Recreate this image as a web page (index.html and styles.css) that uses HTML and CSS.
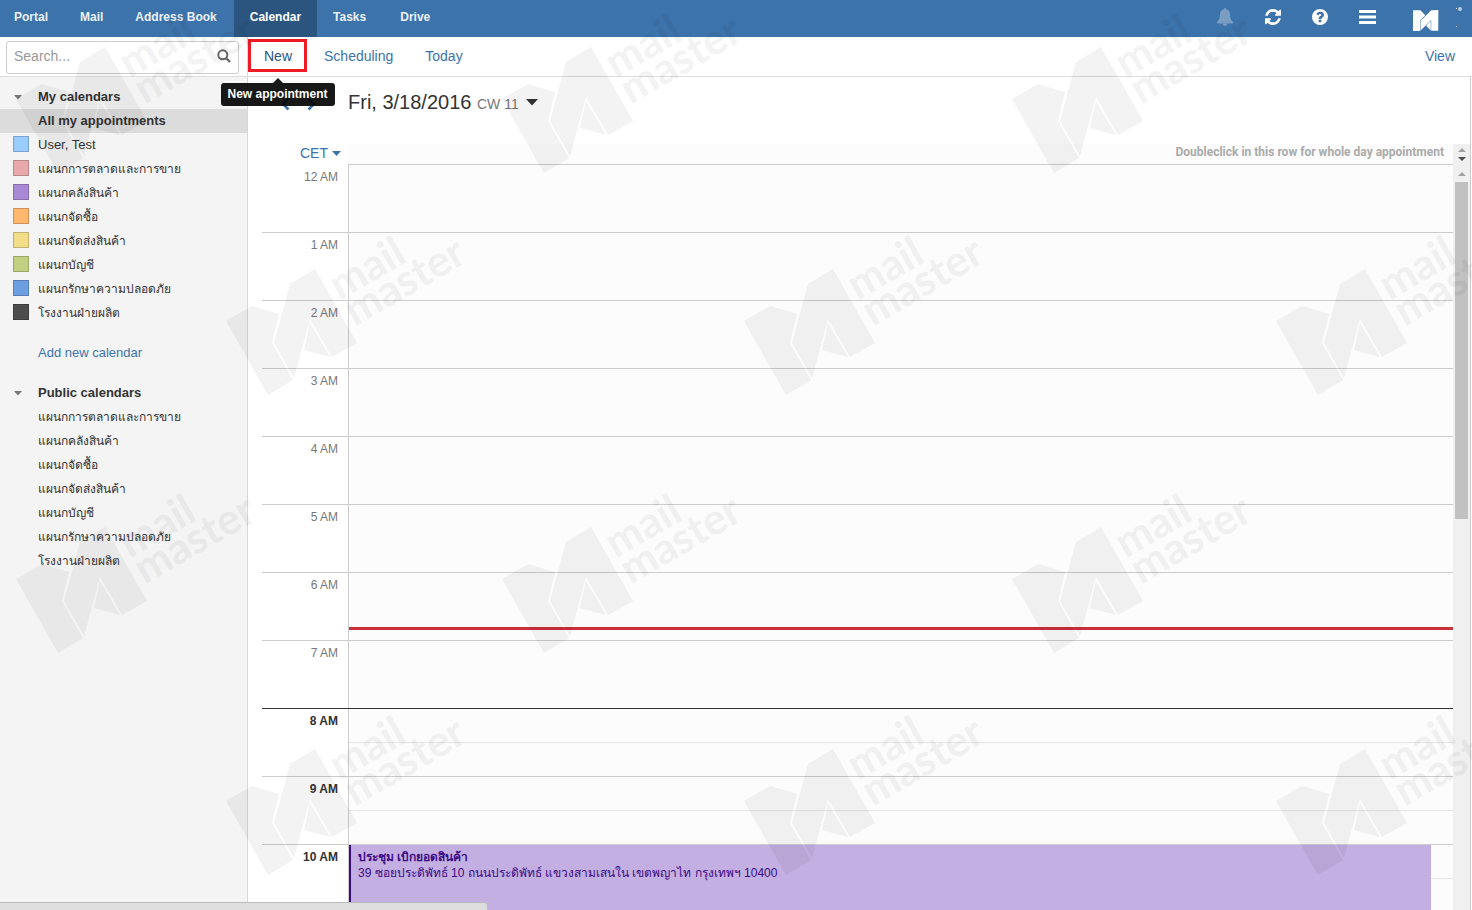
FILE: index.html
```html
<!DOCTYPE html>
<html lang="en">
<head>
<meta charset="utf-8">
<title>Calendar</title>
<link rel="stylesheet" href="styles.css">
</head>
<body>
<div class="app">
  <header class="topbar">
    <nav class="apps">
      <a href="#">Portal</a><a href="#">Mail</a><a href="#">Address Book</a><a href="#" class="active" aria-current="page">Calendar</a><a href="#">Tasks</a><a href="#">Drive</a>
    </nav>
    <div class="tools">
      <button type="button" class="tool dim" aria-label="Notifications"><svg width="18" height="18" viewBox="0 0 18 18"><path fill="currentColor" d="M9 0c.7 0 1.100.4 1.100 1.200C12.700 1.700 14 3.800 14 6.300c0 4 1.100 6.200 3.200 7.900 0 .7-.5 1.200-1.200 1.200H2c-.7 0-1.200-.5-1.200-1.200C2.900 12.500 4 10.300 4 6.300c0-2.500 1.300-4.600 3.900-5.100C7.900.4 8.300 0 9 0zM6.800 15.800h4.400A2.200 2.200 0 0 1 9 18a2.200 2.200 0 0 1-2.200-2.200z"/></svg></button>
      <button type="button" class="tool" aria-label="Refresh"><svg width="16" height="16" viewBox="0 0 1536 1536"><path fill="currentColor" d="M1511 928q0 5-1 7-64 268-268 434.500T764 1536q-146 0-282.500-55T238 1324l-129 129q-19 19-45 19t-45-19-19-45V960q0-26 19-45t45-19h448q26 0 45 19t19 45-19 45l-137 137q71 66 161 102t187 36q134 0 250-65t186-179q11-17 53-117 8-23 30-23h192q13 0 22.500 9.500t9.500 22.500zm25-800v448q0 26-19 45t-45 19h-448q-26 0-45-19t-19-45 19-45l138-138Q969 256 768 256q-134 0-250 65T332 500q-11 17-53 117-8 23-30 23H50q-13 0-22.500-9.500T18 608v-7q65-268 270-434.500T768 0q146 0 284 55.500T1297 212l130-129q19-19 45-19t45 19 19 45z"/></svg></button>
      <button type="button" class="tool" aria-label="Help"><svg width="16" height="16" viewBox="0 0 1536 1536"><path fill="currentColor" fill-rule="evenodd" d="M768 0a768 768 0 1 1 0 1536A768 768 0 0 1 768 0zm128 1248v-192q0-14-9-23t-23-9H672q-14 0-23 9t-9 23v192q0 14 9 23t23 9h192q14 0 23-9t9-23zm256-672q0-88-55.500-163T958 297t-170-41q-243 0-371 213-15 24 8 42l132 100q7 6 19 6 16 0 25-12 53-68 86-92 34-24 86-24 48 0 85.500 26t37.500 59q0 38-20 61t-68 45q-63 28-115.500 86.500T640 892v36q0 14 9 23t23 9h192q14 0 23-9t9-23q0-19 21.500-49.500T972 829q32-18 49-28.500t46-35 44.500-48 28-60.500 12.500-81z"/></svg></button>
      <button type="button" class="tool" aria-label="Menu"><svg width="17" height="14" viewBox="0 0 17 14"><path fill="currentColor" d="M0 0h17v3H0zM0 5.500h17v3H0zM0 11h17v3H0z"/></svg></button>
      <svg class="brand" width="49" height="28" viewBox="0 0 49 28"><g fill="#fff" transform="translate(0 5) scale(.245) translate(43 -73) rotate(30)"><path d="M0 85l26-15 27 8-7 29 21 37-25 15z"/><path d="M48 107L64 48l25-15 42 74-25 14-22-38-16 59z"/><path d="M84 87l20 34-26-7z"/></g><circle cx="47" cy="4" r="2" fill="#b9cce0"/><path fill="#fff" d="M43 3h1v1h-1zM43 21h1v1h-1z"/></svg>
    </div>
  </header>

  <div class="body">
    <aside class="sidebar">
      <form class="search">
        <input type="text" placeholder="Search..." aria-label="Search">
        <button type="button" aria-label="Start search"><svg width="14" height="14" viewBox="0 0 14 14" fill="none" stroke="currentColor" stroke-width="2"><circle cx="5.800" cy="5.800" r="4.500"/><path d="M9 9l4 4" stroke-width="2.400"/></svg></button>
      </form>
      <div class="folders">
        <h2><svg width="8" height="5" viewBox="0 0 8 5"><path d="M0 0h8L4 4.500z"/></svg>My calendars</h2>
        <ul>
          <li class="selected"><a href="#">All my appointments</a></li>
          <li><i class="c1"></i><a href="#">User, Test</a></li>
          <li lang="th"><i class="c2"></i><a href="#">แผนกการตลาดและการขาย</a></li>
          <li lang="th"><i class="c3"></i><a href="#">แผนกคลังสินค้า</a></li>
          <li lang="th"><i class="c4"></i><a href="#">แผนกจัดซื้อ</a></li>
          <li lang="th"><i class="c5"></i><a href="#">แผนกจัดส่งสินค้า</a></li>
          <li lang="th"><i class="c6"></i><a href="#">แผนกบัญชี</a></li>
          <li lang="th"><i class="c7"></i><a href="#">แผนกรักษาความปลอดภัย</a></li>
          <li lang="th"><i class="c8"></i><a href="#">โรงงานฝ่ายผลิต</a></li>
        </ul>
        <a href="#" class="add">Add new calendar</a>
        <h2><svg width="8" height="5" viewBox="0 0 8 5"><path d="M0 0h8L4 4.500z"/></svg>Public calendars</h2>
        <ul lang="th">
          <li><a href="#">แผนกการตลาดและการขาย</a></li>
          <li><a href="#">แผนกคลังสินค้า</a></li>
          <li><a href="#">แผนกจัดซื้อ</a></li>
          <li><a href="#">แผนกจัดส่งสินค้า</a></li>
          <li><a href="#">แผนกบัญชี</a></li>
          <li><a href="#">แผนกรักษาความปลอดภัย</a></li>
          <li><a href="#">โรงงานฝ่ายผลิต</a></li>
        </ul>
      </div>
    </aside>

    <main class="main">
      <div class="toolbar">
        <div class="new-wrap">
          <a href="#" class="new">New</a>
          <div class="tooltip" role="tooltip">New appointment</div>
        </div>
        <a href="#">Scheduling</a>
        <a href="#">Today</a>
        <a href="#" class="view">View</a>
      </div>
      <div class="calendar">
        <div class="heading">
          <div class="arrows">
            <button type="button" aria-label="Previous day"><svg width="9" height="14" viewBox="0 0 9 14"><path d="M7.500 1.500L2 7l5.500 5.500" fill="none" stroke="currentColor" stroke-width="2.600"/></svg></button>
            <button type="button" aria-label="Next day"><svg width="9" height="14" viewBox="0 0 9 14"><path d="M1.500 1.500L7 7l-5.500 5.500" fill="none" stroke="currentColor" stroke-width="2.600"/></svg></button>
          </div>
          <button type="button" class="date">Fri, 3/18/2016 <span>CW 11</span><svg width="12" height="7" viewBox="0 0 12 7"><path fill="currentColor" d="M0 0h12L6 6.500z"/></svg></button>
        </div>
        <div class="allday">
          <button type="button" class="zone">CET<svg width="9" height="5" viewBox="0 0 9 5"><path fill="currentColor" d="M0 0h9L4.500 5z"/></svg></button>
          <div class="allday-row">Doubleclick in this row for whole day appointment</div>
          <div class="track"><svg width="17" height="20" viewBox="0 0 17 20"><path fill="#a3a3a3" d="M5 8h8L9 4z"/><path fill="#505050" d="M5 13h8l-4 4z"/></svg></div>
        </div>
        <div class="day">
          <div class="hours">
            <div class="hour first"><span>12 AM</span><div></div></div>
            <div class="hour"><span>1 AM</span><div></div></div>
            <div class="hour"><span>2 AM</span><div></div></div>
            <div class="hour"><span>3 AM</span><div></div></div>
            <div class="hour"><span>4 AM</span><div></div></div>
            <div class="hour"><span>5 AM</span><div></div></div>
            <div class="hour"><span>6 AM</span><div></div></div>
            <div class="hour"><span>7 AM</span><div></div></div>
            <div class="hour work start"><span>8 AM</span><div></div></div>
            <div class="hour work"><span>9 AM</span><div></div></div>
            <div class="hour work"><span>10 AM</span><div></div></div>
            <div class="now"></div>
            <article class="event" lang="th"><strong>ประชุม เบิกยอดสินค้า</strong><p>39 ซอยประดิพัทธ์ 10 ถนนประดิพัทธ์ แขวงสามเสนใน เขตพญาไท กรุงเทพฯ 10400</p></article>
          </div>
          <div class="track"><svg width="17" height="17" viewBox="0 0 17 17"><path fill="#a3a3a3" d="M5 12h8L9 8z"/></svg><div class="thumb"></div></div>
        </div>
      </div>
    </main>
  </div>

  <div class="status"></div>

  <svg class="watermark" aria-hidden="true">
    <defs>
      <g id="mark">
        <path d="M0 85l26-15 27 8-7 29 21 37-25 15z"/>
        <path d="M48 107L64 48l25-15 42 74-25 14-22-38-16 59z"/>
        <path d="M84 87l20 34-26-7z"/>
        <g transform="translate(115 63) rotate(-30)"><text x="-2" y="1">mail</text><text x="-2" y="31">master</text></g>
      </g>
    </defs>
    <use href="#mark" x="16" y="14"/><use href="#mark" x="502" y="14"/><use href="#mark" x="1012" y="14"/>
    <use href="#mark" x="226" y="236"/><use href="#mark" x="744" y="236"/><use href="#mark" x="1276" y="236"/>
    <use href="#mark" x="16" y="494"/><use href="#mark" x="502" y="494"/><use href="#mark" x="1012" y="494"/>
    <use href="#mark" x="226" y="716"/><use href="#mark" x="744" y="716"/><use href="#mark" x="1276" y="716"/>
  </svg>
</div>
</body>
</html>
```
FILE: styles.css
```css
* { box-sizing: border-box; }
body { margin: 0; font-family: "Liberation Sans", Arial, sans-serif; font-size: 13px; color: #333; background: #fff; }
a { color: inherit; text-decoration: none; }
button { font: inherit; color: inherit; background: none; border: 0; padding: 0; margin: 0; display: flex; align-items: center; cursor: pointer; }
ul { list-style: none; margin: 0; padding: 0; }
svg { display: block; flex: none; }

.app { position: relative; height: 100vh; display: flex; flex-direction: column; overflow: hidden; }

.topbar { flex: none; height: 37px; display: flex; justify-content: space-between; background: #3d73ab; color: #fff; }
.apps { display: flex; font-size: 12px; font-weight: bold; line-height: 34px; color: #ebf1f7; }
.apps a { padding: 0 16px; }
.apps a:first-child { padding-left: 14px; }
.apps .active { margin-left: 1px; background: #2b557f; color: #fff; }
.apps a:last-child { padding-left: 18px; }
.tools { display: flex; align-items: center; gap: 31px; padding: 0 10px 4px 0; }
.tool.dim { color: #7a9dc4; }
.brand { margin: 4px 0 0 6px; }

.body { flex: 1; min-height: 0; display: flex; }
.sidebar { flex: none; width: 248px; border-right: 1px solid #d8d8d8; background: #f4f4f4; }
.search { display: flex; align-items: center; height: 40px; padding: 4px 8px 2px 6px; background: #fff; border-bottom: 1px solid #ddd; }
.search input { flex: 1; min-width: 0; height: 33px; padding: 0 32px 4px 7px; border: 1px solid #ccc; border-radius: 3px; font: 14px "Liberation Sans", Arial, sans-serif; background: #fff; }
.search input::placeholder { color: #999; }
.search button { margin-left: -22px; margin-right: 8px; padding-bottom: 3px; color: #666; }
.folders { padding-top: 8px; line-height: 24px; }
.folders h2 { display: flex; align-items: center; gap: 16px; margin: 0; padding-left: 14px; font-size: 13px; line-height: 24px; }
.folders h2 svg { fill: #777; }
.folders li { display: flex; align-items: center; height: 24px; padding-left: 13px; }
.folders li:lang(th) { font-size: 12px; }
.folders li a { margin-left: 9px; }
.folders li a:first-child { margin-left: 25px; }
.folders .selected { background: #dcdcdc; font-weight: bold; }
.folders i { width: 16px; height: 16px; margin-bottom: 2px; border: 1px solid rgba(0, 0, 0, .2); }
.c1 { background: #9cf; }
.c2 { background: #e8a9ab; }
.c3 { background: #a889d6; }
.c4 { background: #ffb66e; }
.c5 { background: #f2de88; }
.c6 { background: #c2d082; }
.c7 { background: #6c9fe0; }
.c8 { background: #4d4d4d; }
.folders .add { display: block; margin: 16px 0; padding-left: 38px; color: #3c73aa; }

.main { flex: 1; min-width: 0; display: flex; flex-direction: column; }
.toolbar { flex: none; display: flex; align-items: flex-start; height: 40px; padding-top: 2px; border-bottom: 1px solid #ddd; font-size: 14px; line-height: 35px; color: #3c73aa; }
.toolbar > a { margin-left: 17px; margin-right: 15px; }
.toolbar .view { margin-left: auto; margin-right: 17px; }
.new-wrap { position: relative; }
.new { display: block; height: 33px; padding: 0 12px 0 13px; border: 3px solid #ed1c24; line-height: 29px; color: #2b557f; }
.tooltip { position: absolute; z-index: 2; top: 44px; left: 50%; transform: translateX(-50%); padding: 0 7px; border-radius: 3px; background: #000; opacity: .9; color: #fff; font-size: 12px; font-weight: bold; line-height: 23px; white-space: nowrap; }
.tooltip::before { content: ""; position: absolute; top: -5px; left: 50%; margin-left: -5px; border: 5px solid transparent; border-top: 0; border-bottom-color: #000; }

.calendar { flex: 1; min-height: 0; display: flex; flex-direction: column; margin-right: 1px; border-right: 1px solid #ccc; }
.heading { flex: none; display: flex; height: 67px; padding: 13px 0 0 33px; }
.arrows { display: flex; gap: 17px; width: 67px; height: 24px; color: #3c73aa; }
.date { height: 24px; font-size: 20px; white-space: pre; }
.date span { font-size: 14px; color: #777; padding-top: 4px; }
.date svg { margin-left: 7px; }
.allday { flex: none; display: flex; height: 20px; }
.zone { width: 100px; height: 18px; padding-left: 52px; gap: 4px; font-size: 14px; color: #3c73aa; }
.allday-row { flex: 1; padding-right: 9px; background: #fcfcfc; color: #aaa; font: bold 12px/16px Roboto, sans-serif; text-align: right; }
.arrows button { height: 28px; }
.track { flex: none; width: 17px; background: #f0f0f0; }
.thumb { height: 337px; margin: 1px 2px 0; background: #c1c1c1; }
.day { flex: 1; min-height: 0; display: flex; overflow: hidden; }
.hours { position: relative; flex: 1; min-width: 0; }
.hour { display: flex; height: 68px; margin-left: 14px; border-top: 1px solid #ccc; font-size: 12px; color: #777; }
.hour span { width: 86px; padding: 5px 10px 0 0; text-align: right; }
.hour > div { flex: 1; border-left: 1px solid #ccc; background: #fcfcfc; }
.hour.first { border-top: 0; }
.hour.first span { padding-top: 6px; }
.hour.first > div { border-top: 1px solid #ccc; }
.hour.start { border-top-color: #333; }
.work span { font-weight: bold; color: #333; }
.work > div::before { content: ""; display: block; height: 33px; border-bottom: 1px solid #e5e5e5; }
.now { position: absolute; left: 101px; right: 0; top: 463px; height: 3px; background: #c8303c; }
.event { position: absolute; left: 101px; right: 22px; top: 681px; height: 120px; padding: 4px 7px; border-left: 2px solid #3c0a82; background: #c3afe2; color: #3c0a82; font-size: 12px; line-height: 16px; }
.event strong { display: block; }
.event p { margin: 0; }

.status { position: absolute; left: 0; bottom: 0; z-index: 3; width: 488px; height: 8px; border: 1px solid #bbb; border-left: 0; border-bottom: 0; border-top-right-radius: 4px; background: #dedede; }
.watermark { position: absolute; inset: 0; width: 100%; height: 100%; pointer-events: none; fill: #000; opacity: .045; }
.watermark text { font: bold 43px Lato, sans-serif; }
```
